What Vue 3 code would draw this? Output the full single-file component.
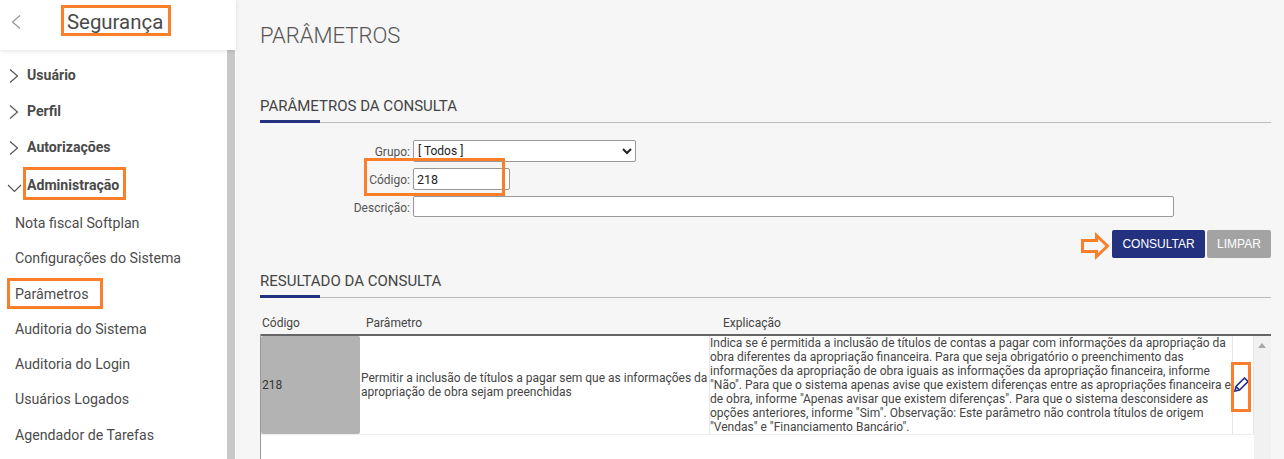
<script setup>
const tree = [
  { label: 'Usuário', open: false },
  { label: 'Perfil', open: false },
  { label: 'Autorizações', open: false },
]
const subs = ['Nota fiscal Softplan', 'Configurações do Sistema', 'Parâmetros', 'Auditoria do Sistema', 'Auditoria do Login', 'Usuários Logados', 'Agendador de Tarefas']
const explicacao = 'Indica se é permitida a inclusão de títulos de contas a pagar com informações da apropriação da obra diferentes da apropriação financeira. Para que seja obrigatório o preenchimento das informações da apropriação de obra iguais as informações da apropriação financeira, informe "Não". Para que o sistema apenas avise que existem diferenças entre as apropriações financeira e de obra, informe "Apenas avisar que existem diferenças". Para que o sistema desconsidere as opções anteriores, informe "Sim". Observação: Este parâmetro não controla títulos de origem "Vendas" e "Financiamento Bancário".'
</script>

<template>
  <div class="page">
    <aside class="side">
      <header class="side-head">
        <svg class="back" width="12" height="18" viewBox="0 0 12 18"><path d="M10 2.500 2.500 9l7.500 6.500" fill="none" stroke="#999" stroke-width="1.300"/></svg>
        <span class="side-title">Segurança</span>
        <span class="mark mark-seg"></span>
      </header>
      <div class="side-body">
        <nav class="menu">
          <div v-for="t in tree" :key="t.label" class="tree-row">
            <svg class="chev" width="10" height="14" viewBox="0 0 10 14"><path d="M1 .5 8.500 7 1 13.500" fill="none" stroke="#555" stroke-width="1.200"/></svg>
            <span>{{ t.label }}</span>
          </div>
          <div class="tree-row open">
            <svg class="chev-down" width="15" height="9" viewBox="0 0 15 9"><path d="M1 1l6.500 6.500L14 1" fill="none" stroke="#555" stroke-width="1.200"/></svg>
            <span class="open-label">Administração</span>
            <span class="mark mark-adm"></span>
          </div>
          <div v-for="s in subs" :key="s" class="sub-row">
            {{ s }}
            <span v-if="s === 'Parâmetros'" class="mark mark-par"></span>
          </div>
        </nav>
        <div class="side-scroll"></div>
      </div>
    </aside>

    <main class="main">
      <h1 class="page-title">PARÂMETROS</h1>

      <h2 class="section first">PARÂMETROS DA CONSULTA</h2>
      <form class="form" @submit.prevent>
        <label>Grupo:</label>
        <select class="field sel"><option>[ Todos ]</option></select>
        <label>Código:</label>
        <div class="code-wrap">
          <input class="field code" value="218" />
          <span class="mark mark-cod"></span>
        </div>
        <label class="desc-label">Descrição:</label>
        <input class="field desc" />
      </form>
      <div class="actions">
        <svg class="arrow" width="30" height="30" viewBox="0 0 30 30"><path d="M1.500 9.500h14V4.500L26.500 15 15.500 25.500v-5h-14z" fill="none" stroke="#fb7f2a" stroke-width="3"/></svg>
        <button class="btn primary">CONSULTAR</button>
        <button class="btn muted">LIMPAR</button>
      </div>

      <h2 class="section second">RESULTADO DA CONSULTA</h2>
      <div class="grid">
        <div class="grid-head">
          <span class="h-code">Código</span>
          <span class="h-param">Parâmetro</span>
          <span class="h-exp">Explicação</span>
        </div>
        <div class="grid-body">
          <div class="rows">
            <div class="row">
              <div class="c-code">218</div>
              <div class="c-param">Permitir a inclusão de títulos a pagar sem que as informações da apropriação de obra sejam preenchidas</div>
              <div class="c-exp">{{ explicacao }}</div>
              <div class="c-edit">
                <svg class="pen" width="15" height="15" viewBox="0 0 15 15"><path d="M10.500 1 14 4.500 5.500 13 1 14 2 9.500zM2 9.500 5.500 13" fill="none" stroke="#24317f" stroke-width="1.600"/></svg>
                <span class="mark mark-pen"></span>
              </div>
            </div>
          </div>
          <div class="grid-scroll"><i class="up"></i></div>
        </div>
      </div>
    </main>
  </div>
</template>

<style scoped>
.page { display: flex; width: 1284px; height: 459px; overflow: hidden; background: #f6f6f6; font-family: Roboto, sans-serif; color: #444; }
.side { width: 236px; flex: none; background: #fff; display: flex; flex-direction: column; position: relative; }
.side-head { height: 50px; flex: none; display: flex; align-items: center; padding-left: 10px; box-shadow: 0 1px 4px rgba(0,0,0,.12); position: relative; z-index: 1; background: #fff; }
.back { margin-right: 45px; margin-top: -6px; }
.side-title { font-size: 20.400px; color: #4a4a4a; position: relative; top: -3px; }
.side-body { flex: 1; display: flex; min-height: 0; }
.menu { width: 227px; padding-top: 7px; }
.side-scroll { width: 8px; background: #c8c8c8; }
.tree-row { height: 36px; display: flex; align-items: center; padding-left: 9px; font-size: 14.100px; font-weight: 700; color: #4a4a4a; position: relative; }
.chev { margin-right: 8px; margin-top: 2px; }
.tree-row.open { height: 41px; padding-left: 7px; }
.chev-down { margin-right: 5px; margin-top: 6px; }
.open-label { margin-top: -2px; }
.sub-row { height: 35.300px; line-height: 35.300px; padding-left: 15px; font-size: 14.200px; color: #4c4c4c; position: relative; }
.mark { position: absolute; border: 3px solid #fb7f2a; box-sizing: border-box; pointer-events: none; }
.mark-seg { left: 61px; top: 5px; width: 110px; height: 31px; }
.mark-adm { left: 23px; top: 2px; width: 103px; height: 33px; }
.mark-par { left: 7px; top: 1px; width: 96px; height: 31px; }
.mark-cod { left: -49px; top: -10px; width: 141px; height: 38px; }
.mark-pen { left: -2px; top: 26px; width: 20px; height: 50px; }

.main { flex: 1; padding: 0 13px 0 24px; min-width: 0; }
.page-title { margin: 23px 0 0; font-size: 22px; line-height: 26px; font-weight: 300; color: #555; }
.section { margin: 0; font-size: 15px; line-height: 17px; font-weight: 400; color: #444; padding-bottom: 7px; border-bottom: 1px solid #bbb; position: relative; }
.section::after { content: ''; position: absolute; left: 0; bottom: -1px; width: 60px; height: 3px; background: #24317f; }
.section.first { margin-top: 49px; }
.section.second { margin-top: 15px; }
.form { display: grid; grid-template-columns: 150px 1fr; column-gap: 3px; row-gap: 6px; margin-top: 17px; align-items: center; }
.form label { text-align: right; font-size: 12px; color: #555; line-height: 14px; padding-top: 1px; }
.form .desc-label { padding-top: 3px; }
.field { box-sizing: border-box; height: 22px; border: 1px solid #999; border-radius: 2px; background: #fff; font-family: Roboto, sans-serif; font-size: 12.500px; color: #222; padding: 0 3px; margin: 0; outline: none; display: block; }
.sel { width: 223px; padding: 0; font-size: 12px; }
.code-wrap { position: relative; width: 97px; }
.code { width: 97px; }
.desc { width: 761px; height: 21px; }
.actions { display: flex; justify-content: flex-end; align-items: center; gap: 2px; margin-top: 13px; position: relative; }
.arrow { position: absolute; left: 821px; top: 1px; }
.btn { height: 28px; border: 0; border-radius: 2px; color: #fff; font-family: "Liberation Sans", Arial, sans-serif; font-size: 12px; padding: 0; }
.primary { width: 93px; background: #24317f; }
.muted { width: 64px; background: #a3a3a3; }
.grid { margin-top: 18px; height: 143px; border-left: 1px solid #999; }
.grid-head { height: 18px; position: relative; font-size: 12px; line-height: 14px; color: #444; background: #f6f6f6; margin-left: -1px; padding-left: 1px; }
.grid-head span { position: absolute; top: 0; }
.h-code { left: 2px; }
.h-param { left: 106px; }
.h-exp { left: 463px; }
.grid-body { display: flex; border-top: 2px solid #666; height: 200px; }
.rows { width: 993px; background: #fff; }
.row { display: flex; height: 98px; border-bottom: 1px solid #eee; }
.c-code { width: 99px; flex: none; background: #b3b3b3; border-radius: 2px; display: flex; align-items: center; padding-left: 1px; box-sizing: border-box; font-size: 12px; color: #333; }
.c-param { width: 349px; flex: none; padding-left: 1px; box-sizing: border-box; align-self: center; font-size: 12px; line-height: 14px; color: #444; }
.c-exp { width: 524px; flex: none; border-left: 1px solid #e6e6e6; border-right: 1px solid #e6e6e6; box-sizing: border-box; font-size: 12px; line-height: 14px; color: #444; padding: 0; }
.c-edit { flex: 1; position: relative; border-right: 1px solid #e6e6e6; display: flex; align-items: center; padding-left: 1px; box-sizing: border-box; }
.pen { display: block; margin-top: -2px; }
.grid-scroll { width: 17px; background: #f1f1f1; position: relative; }
.up { position: absolute; left: 4px; top: 7px; border: 4px solid transparent; border-top: 0; border-bottom: 5px solid #a8a8a8; width: 0; height: 0; }
</style>
